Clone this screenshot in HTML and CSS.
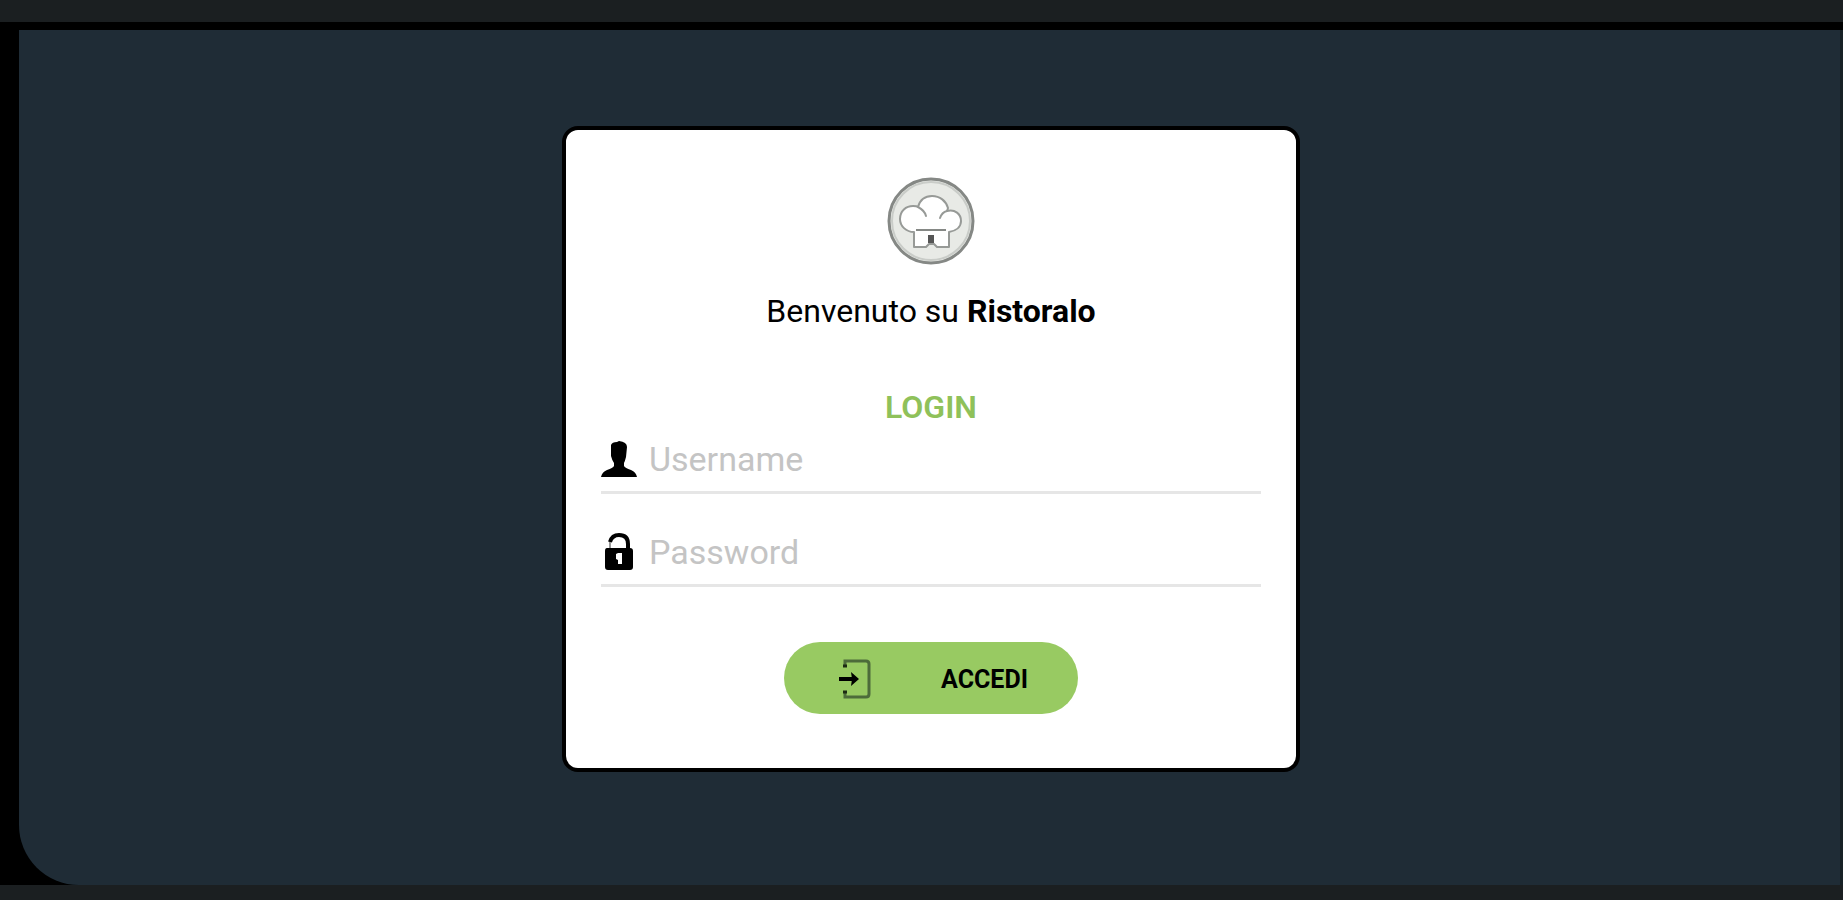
FILE: index.html
```html
<!DOCTYPE html>
<html lang="it">
<head>
    <meta charset="UTF-8">
    <meta name="viewport" content="width=device-width, initial-scale=1.0">
    <title>Ristoralo - Login</title>
    <link rel="stylesheet" href="styles.css">
</head>
<body>
    <div class="screen">
        <main class="panel">
            <form class="login-card">
                <svg class="logo" viewBox="0 0 88 88" aria-hidden="true">
                    <circle cx="44" cy="44" r="42" fill="#e8eae6" stroke="#858885" stroke-width="3"/>
                    <circle cx="44" cy="44" r="39" fill="none" stroke="#c9ccc8" stroke-width="2"/>
                    <path d="M27 55C19 55 13 49 13 42C13 34 19 29 26 29C28 29 30 29 31 30C33 23 38 19 45 19C53 19 59 24 61 31L60 34C68 32 74 37 74 44C74 50 69 54 62 55V70H50L47 67H42L39 70H27Z" fill="#fff" stroke="#979a97" stroke-width="2" stroke-linejoin="round"/>
                    <path d="M31 30C35 32 38 35 39 39M60 34C56 35 54 38 53 41" fill="none" stroke="#979a97" stroke-width="2" stroke-linecap="round"/>
                    <path d="M29 53H59" stroke="#858885" stroke-width="2"/>
                    <path d="M41 58H47V66H41Z" fill="#555"/>
                </svg>
                <p class="welcome">Benvenuto su <strong>Ristoralo</strong></p>
                <h1 class="title">LOGIN</h1>

                <div class="field">
                    <label class="field-label" for="username" aria-label="Username">
                        <svg class="field-icon" viewBox="0 0 36 40">
                            <path d="M10 6Q11 3 16 3L18 2Q26 3 26 8L25 18Q24 22 23 24V27Q24 29 30 31Q35 33 36 38H0Q1 33 6 31Q12 29 13 27V24Q11 21 10 17Z"/>
                        </svg>
                    </label>
                    <input class="field-input" type="text" id="username" placeholder="Username">
                </div>

                <div class="field">
                    <label class="field-label" for="password" aria-label="Password">
                        <svg class="field-icon" viewBox="0 0 36 40">
                            <path d="M9 10Q11 3 18 3Q27 3 27 12V18" fill="none" stroke="#000" stroke-width="4"/>
                            <path d="M9 10V18" stroke="#999" stroke-width="2"/>
                            <path fill-rule="evenodd" d="M6 16H29Q32 16 32 19V35Q32 38 29 38H7Q4 38 4 35V19Q4 16 6 16ZM15 22V27L17 28V32H21V21H17Z"/>
                        </svg>
                    </label>
                    <input class="field-input" type="password" id="password" placeholder="Password">
                </div>

                <button class="login-button" type="submit">
                    <svg class="login-icon" viewBox="0 0 34 40" aria-hidden="true">
                        <path d="M7 7V2H28Q31 2 31 5V35Q31 38 28 38H7V33" fill="none" stroke="#4d6b3a" stroke-width="3"/>
                        <path d="M5 7H9M5 33H9" stroke="#1c2a12" stroke-width="3"/>
                        <path d="M1 20H18" stroke="#000" stroke-width="4"/>
                        <path d="M13 13L21 20L13 27L14 20Z" fill="#000"/>
                    </svg>
                    <span class="login-text">ACCEDI</span>
                </button>
            </form>
        </main>
    </div>
</body>
</html>
```
FILE: styles.css
```css
* {
    box-sizing: border-box;
}

body {
    margin: 0;
    font-family: Roboto, Arial, sans-serif;
    background-color: #000;
    color: #000;
}

.screen {
    display: flex;
    min-height: 100vh;
    padding-left: 19px;
    border-top: 22px solid #1b1f21;
    border-bottom: 15px solid #1b1f21;
}

.panel {
    flex: 1;
    display: flex;
    justify-content: center;
    align-items: flex-start;
    margin-top: 8px;
    padding: 96px 20px;
    background-color: #1f2c36;
    border-bottom-left-radius: 60px;
    box-shadow: inset -3px 0 0 #172126;
}

.login-card {
    display: flex;
    flex-direction: column;
    align-items: center;
    width: 100%;
    max-width: 738px;
    padding: 47px 35px 54px;
    background-color: #fff;
    border: 4px solid #000;
    border-radius: 16px;
}

.logo {
    width: 88px;
    height: 88px;
}

.welcome {
    margin: 27px 0 58px;
    font-size: 32px;
    line-height: 38px;
}

.title {
    margin: 0 0 6px;
    font-size: 32px;
    line-height: 38px;
    font-weight: 600;
    color: #8fc15a;
}

.field {
    display: flex;
    align-items: center;
    gap: 12px;
    width: 100%;
    height: 62px;
    margin-bottom: 31px;
    padding-bottom: 5px;
    border-bottom: 3px solid #e6e6e6;
}

.field-label {
    display: flex;
}

.field-icon {
    width: 36px;
    height: 40px;
    overflow: visible;
}

.field-input {
    flex: 1;
    min-width: 0;
    padding: 0;
    border: none;
    outline: none;
    background: transparent;
    font-family: inherit;
    font-size: 34px;
    line-height: 40px;
    color: #000;
}

.field-input::placeholder {
    color: #c4c4c4;
}

.login-button {
    display: flex;
    align-items: center;
    width: 294px;
    height: 72px;
    margin-top: 24px;
    padding: 2px 50px 0 54px;
    border: none;
    border-radius: 36px;
    background-color: #98ca62;
    font-family: inherit;
    color: #000;
    cursor: pointer;
}

.login-button:hover {
    background-color: #8bbd55;
}

.login-icon {
    width: 34px;
    height: 40px;
}

.login-text {
    margin-left: auto;
    font-size: 25px;
    font-weight: 700;
}
```
